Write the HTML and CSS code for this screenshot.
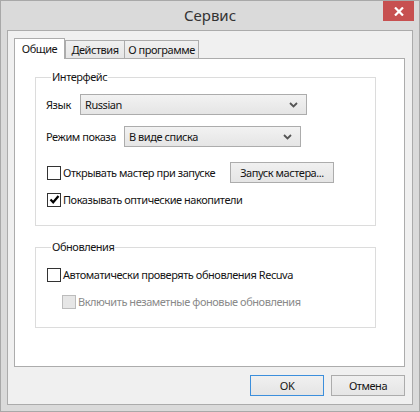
FILE: index.html
```html
<!DOCTYPE html>
<html>
<head>
<meta charset="utf-8">
<link rel="stylesheet" href="styles.css">
</head>
<body>
<div class="window">
  <div class="titlebar">
    <div></div>
    <div class="title">Сервис</div>
    <div class="close">
      <svg width="10" height="9" viewBox="0 0 10 9"><path d="M1 0.5 L9 8.5 M9 0.5 L1 8.5" stroke="#fff" stroke-width="2.2" fill="none"/></svg>
    </div>
  </div>
  <div class="client">
    <div class="tabs">
      <div class="tab active">Общие</div>
      <div class="tab">Действия</div>
      <div class="tab">О программе</div>
    </div>
    <div class="panel">
      <fieldset class="group g1">
        <legend>Интерфейс</legend>
        <div class="row r1">
          <span class="lbl l1">Язык</span>
          <div class="combo c1"><span>Russian</span><svg width="9" height="6" viewBox="0 0 9 6"><path d="M1 1 L4.5 4.5 L8 1" stroke="#555" stroke-width="1.8" fill="none"/></svg></div>
        </div>
        <div class="row r2">
          <span class="lbl l2">Режим показа</span>
          <div class="combo c2"><span>В виде списка</span><svg width="9" height="6" viewBox="0 0 9 6"><path d="M1 1 L4.5 4.5 L8 1" stroke="#555" stroke-width="1.8" fill="none"/></svg></div>
        </div>
        <div class="row r3">
          <span class="cb"></span><span class="cbl">Открывать мастер при запуске</span>
          <div class="btn wiz">Запуск мастера...</div>
        </div>
        <div class="row r4">
          <span class="cb"><svg width="11" height="11" viewBox="0 0 11 11"><path d="M1.5 5.5 L4.2 8.3 L9.5 2" stroke="#000" stroke-width="2.2" fill="none"/></svg></span><span class="cbl">Показывать оптические накопители</span>
        </div>
      </fieldset>
      <fieldset class="group g2">
        <legend>Обновления</legend>
        <div class="row r5">
          <span class="cb"></span><span class="cbl">Автоматически проверять обновления Recuva</span>
        </div>
        <div class="row r6">
          <span class="cb disabled"></span><span class="cbl dis">Включить незаметные фоновые обновления</span>
        </div>
      </fieldset>
    </div>
    <div class="buttons">
      <div class="btn dlg default">OK</div>
      <div class="btn dlg">Отмена</div>
    </div>
  </div>
</div>
</body>
</html>
```

FILE: styles.css
```css
* { box-sizing: border-box; }
html, body { margin: 0; padding: 0; }
body {
  font-family: "Noto Sans", "Open Sans", sans-serif;
  font-size: 11px;
  letter-spacing: -0.45px;
  color: #151515;
  width: 420px;
  height: 412px;
  overflow: hidden;
}
.window {
  width: 420px;
  height: 412px;
  border: 1px solid #a8a8a8;
  background: #dadada;
  display: flex;
  flex-direction: column;
  padding: 0 6px 6px 6px;
}
.titlebar {
  height: 29px;
  display: grid;
  grid-template-columns: 1fr auto 1fr;
  margin: 0 -6px;
}
.title {
  font-size: 15px;
  letter-spacing: 0;
  color: #333;
  line-height: 29px;
}
.close {
  justify-self: end;
  align-self: start;
  width: 31px;
  height: 20px;
  margin-right: 5px;
  background: #c75050;
  display: flex;
  align-items: center;
  justify-content: center;
}
.close svg { display: block; }
.client {
  flex: 1;
  border: 1px solid #ababab;
  background: #f0f0f0;
  display: flex;
  flex-direction: column;
  padding: 7px 7px 8px 6px;
}
.tabs {
  display: flex;
  align-items: flex-end;
  height: 20px;
  position: relative;
  z-index: 1;
}
.tab {
  height: 18px;
  border: 1px solid #acacac;
  border-bottom: none;
  background: linear-gradient(#f0f0f0, #e6e6e6);
  margin-left: -1px;
  display: flex;
  align-items: center;
  justify-content: center;
  white-space: nowrap;
}
.tab:nth-child(2) { width: 60px; margin-left: 0; }
.tab:nth-child(3) { width: 75px; }
.tab.active {
  width: 51px;
  height: 21px;
  margin-left: 0;
  margin-bottom: -1px;
  background: #fff;
  border-color: #acacac;
  position: relative;
  z-index: 2;
  padding-bottom: 2px;
}
.panel {
  flex: 1;
  border: 1px solid #acacac;
  background: #fff;
  display: flex;
  flex-direction: column;
  padding: 0 28px 0 20px;
}
.group {
  border: 1px solid #dcdcdc;
  margin: 0;
  padding: 0 10px 15px 10px;
  min-width: 0;
}
.group legend {
  padding: 0 1px;
  margin-left: 5px;
  line-height: 14px;
  height: 14px;
}
.g1 { margin-top: 11px; }
.g2 { margin-top: 14px; }
.row {
  display: flex;
  align-items: center;
  height: 21px;
  white-space: nowrap;
}
.r1 { margin-top: 10px; }
.r2 { margin-top: 11px; }
.r3 { margin-top: 15px; }
.r4 { margin-top: 6px; }
.r5 { margin-top: 10px; }
.r6 { margin-top: 6px; padding-left: 15px; }
.lbl { flex: none; }
.l1 { width: 34px; }
.l2 { width: 78px; }
.combo {
  height: 21px;
  border: 1px solid #acacac;
  background: linear-gradient(#f2f2f2, #e5e5e5);
  display: flex;
  align-items: center;
  justify-content: space-between;
  padding: 0 8px 0 4px;
}
.combo svg { display: block; }
.c1 { width: 227px; }
.c2 { width: 177px; }
.cb {
  width: 14px;
  height: 14px;
  border: 1px solid #333;
  background: #fff;
  margin-left: 1px;
  display: flex;
  align-items: center;
  justify-content: center;
}
.cb svg { display: block; }
.cb.disabled {
  border-color: #bcbcbc;
  background: #e6e6e6;
}
.cbl { margin-left: 2px; }
.dis { color: #8a8a8a; }
.btn {
  height: 21px;
  border: 1px solid #acacac;
  background: linear-gradient(#f0f0f0, #e5e5e5);
  display: flex;
  align-items: center;
  justify-content: center;
  white-space: nowrap;
}
.wiz { width: 104px; margin-left: auto; margin-right: 31px; }
.buttons {
  display: flex;
  justify-content: flex-end;
  gap: 7px;
  margin-top: 8px;
}
.dlg { width: 74px; }
.default { border-color: #3c8fdc; }
```
